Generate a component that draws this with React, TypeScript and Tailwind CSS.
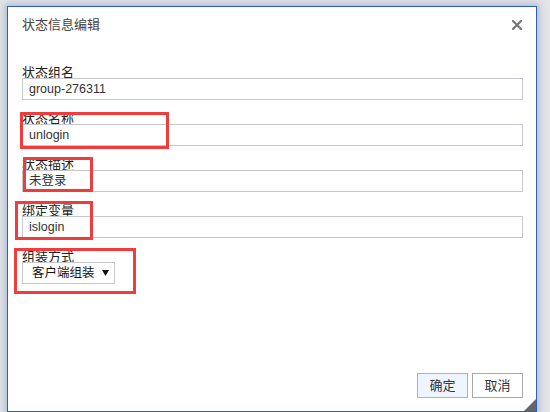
import React from 'react';

const cjk = { fontFamily: '"Liberation Sans", "Noto Sans CJK SC", sans-serif' };

interface FieldProps {
    label: string;
    value: string;
}

function Field({ label, value }: FieldProps) {
    return (
        <div className="flex flex-col mb-[12px]">
            <div className="h-[12px] text-[13px] leading-[13px] text-[#222]">{label}</div>
            <div className="relative h-[22px] bg-white border border-[#c4c8cc] pl-[6px] flex items-center text-[12.5px] text-[#333]">
                {value}
            </div>
        </div>
    );
}

export default function App() {
    return (
        <div className="relative w-[550px] h-[412px] overflow-hidden bg-[#e3e4e6]" style={cjk}>
            <div className="absolute left-[7px] top-[6px] w-[530px] h-[406px] bg-white border border-[#2f5fb3] shadow-[0_0_7px_2px_rgba(60,100,180,0.35)] flex flex-col">
                {/* Header */}
                <div className="flex items-center justify-between pl-[14px] pr-[13px] h-[36px]">
                    <span className="text-[13px] text-[#444]">状态信息编辑</span>
                    <svg width="10" height="10" viewBox="0 0 10 10" className="mr-[1px]">
                        <path d="M1 1 L9 9 M9 1 L1 9" stroke="#777" strokeWidth="2.2" strokeLinecap="square" />
                    </svg>
                </div>

                {/* Body */}
                <div className="flex flex-col pl-[14px] pr-[13px] pt-[23px] flex-1">
                    <Field label="状态组名" value="group-276311" />
                    <Field label="状态名称" value="unlogin" />
                    <Field label="状态描述" value="未登录" />
                    <Field label="绑定变量" value="islogin" />
                    <div className="flex flex-col">
                        <div className="h-[12px] text-[13px] leading-[13px] text-[#222]">组装方式</div>
                        <div className="relative w-[93px] h-[22px] bg-white border border-[#c4c8cc] flex items-center justify-between pl-[9px] pr-[5px] text-[12.5px] text-[#111]">
                            <span>客户端组装</span>
                            <svg width="7" height="6" viewBox="0 0 7 6">
                                <path d="M0 0 H7 L3.5 6 Z" fill="#111" />
                            </svg>
                        </div>
                    </div>
                </div>

                {/* Footer */}
                <div className="flex justify-end gap-[4px] pr-[13px] pb-[13px]">
                    <button className="w-[51px] h-[25px] border border-[#8cb6ec] bg-[#eef5ff] text-[13px] text-[#333]">确定</button>
                    <button className="w-[51px] h-[25px] border border-[#a9a9a9] bg-white text-[13px] text-[#333]">取消</button>
                </div>

                {/* resize grip */}
                <svg width="12" height="12" viewBox="0 0 12 12" className="absolute right-0 bottom-0">
                    <path d="M12 0 V12 H0 Z" fill="#666" />
                </svg>
            </div>

            {/* annotation boxes */}
            <div className="absolute left-[20px] top-[112px] w-[149px] h-[37px] border-[3px] border-[#f03c3c]" />
            <div className="absolute left-[23px] top-[157px] w-[70px] h-[35px] border-[3px] border-[#f03c3c]" />
            <div className="absolute left-[15px] top-[201px] w-[78px] h-[39px] border-[3px] border-[#f03c3c]" />
            <div className="absolute left-[14px] top-[248px] w-[122px] h-[46px] border-[3px] border-[#f03c3c]" />
        </div>
    );
}
